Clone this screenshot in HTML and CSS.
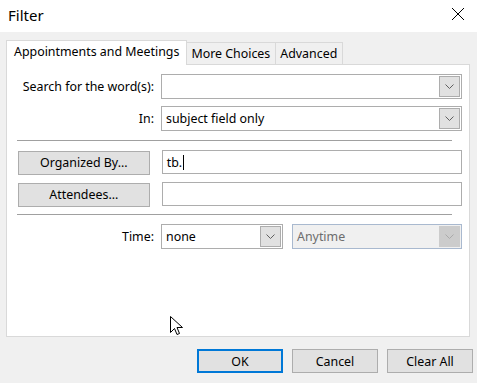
FILE: index.html
```html
<!DOCTYPE html>
<html>
<head>
<meta charset="utf-8">
<link rel="stylesheet" href="styles.css">
</head>
<body>
<div class="window">
  <div class="titlebar">
    <span class="title">Filter</span>
    <svg class="close" width="14" height="14" viewBox="0 0 14 14"><path d="M1 1L13 13M13 1L1 13" stroke="#000" stroke-width="1" fill="none"/></svg>
  </div>
  <div class="tabs">
    <div class="tab active">Appointments and Meetings</div>
    <div class="tab">More Choices</div>
    <div class="tab">Advanced</div>
  </div>
  <div class="panel">
    <div class="row">
      <label class="lbl">Search for the word(s):</label>
      <div class="combo wide">
        <span class="val"></span>
        <span class="drop"><svg width="9" height="5" viewBox="0 0 9 5"><path d="M0.5 0.5L4.5 4.5L8.5 0.5" stroke="#606060" fill="none"/></svg></span>
      </div>
    </div>
    <div class="row">
      <label class="lbl">In:</label>
      <div class="combo wide">
        <span class="val">subject field only</span>
        <span class="drop"><svg width="9" height="5" viewBox="0 0 9 5"><path d="M0.5 0.5L4.5 4.5L8.5 0.5" stroke="#606060" fill="none"/></svg></span>
      </div>
    </div>
    <div class="sep"></div>
    <div class="row btnrow">
      <button class="btn side">Organized By...</button>
      <div class="text"><span class="val">tb.</span><span class="caret"></span></div>
    </div>
    <div class="row btnrow">
      <button class="btn side">Attendees...</button>
      <div class="text"></div>
    </div>
    <div class="sep sep2"></div>
    <div class="row timerow">
      <label class="lbl">Time:</label>
      <div class="combo small">
        <span class="val">none</span>
        <span class="drop"><svg width="9" height="5" viewBox="0 0 9 5"><path d="M0.5 0.5L4.5 4.5L8.5 0.5" stroke="#606060" fill="none"/></svg></span>
      </div>
      <div class="combo disabled">
        <span class="val">Anytime</span>
        <span class="drop"><svg width="9" height="5" viewBox="0 0 9 5"><path d="M0.5 0.5L4.5 4.5L8.5 0.5" stroke="#aaa" fill="none"/></svg></span>
      </div>
    </div>
    <svg class="cursor" width="13" height="20" viewBox="0 0 13 20"><path d="M0.5 0.5L0.5 16.5L4.5 12.5L7 18.5L9.5 17.5L7 11.5L12.5 11.5Z" fill="#fff" stroke="#000" stroke-width="1" stroke-linejoin="miter"/></svg>
  </div>
  <div class="footer">
    <button class="btn foot default">OK</button>
    <button class="btn foot">Cancel</button>
    <button class="btn foot">Clear All</button>
  </div>
</div>
</body>
</html>
```

FILE: styles.css
```css
html, body {
  margin: 0;
  padding: 0;
}
body {
  width: 477px;
  height: 383px;
  background: #f0f0f0;
  font-family: "Noto Sans", "Open Sans", sans-serif;
  font-size: 12.4px;
  color: #000;
  overflow: hidden;
}
.window {
  display: flex;
  flex-direction: column;
  height: 383px;
}
.titlebar {
  height: 32px;
  background: #fff;
  display: flex;
  align-items: center;
  justify-content: space-between;
  padding: 0 12px 0 8px;
  flex: none;
}
.title {
  font-size: 15px;
  margin-top: -2px;
}
.close {
  display: block;
  margin-top: -5px;
}
.tabs {
  display: flex;
  align-items: flex-start;
  margin: 8px 0 -1px 6px;
  height: 25px;
  position: relative;
  z-index: 2;
}
.tab {
  height: 22px;
  margin-top: 2px;
  line-height: 21px;
  padding: 0 5px 0 4px;
  border: 1px solid #d9d9d9;
  border-bottom: none;
  background: #f0f0f0;
  box-sizing: border-box;
  margin-left: -1px;
}
.tab.active {
  height: 25px;
  margin-top: 0;
  line-height: 22px;
  background: #fff;
  padding: 0 7px 0 7px;
  margin-left: 0;
}
.tab.active + .tab {
  margin-left: 0;
  border-left: none;
}
.panel {
  position: relative;
  margin: 0 7px 0 6px;
  height: 273px;
  box-sizing: border-box;
  border: 1px solid #d9d9d9;
  background: #fff;
  padding: 9px 7px 0 0;
  display: flex;
  flex-direction: column;
  flex: none;
}
.row {
  display: flex;
  align-items: center;
  height: 25px;
  margin-bottom: 7px;
}
.lbl {
  width: 147px;
  text-align: right;
  padding-right: 7px;
  flex: none;
}
.combo {
  display: flex;
  align-items: center;
  height: 25px;
  box-sizing: border-box;
  border: 1px solid #adadad;
  background: #fff;
  padding: 1px;
}
.combo.wide {
  width: 301px;
}
.combo.small {
  width: 122px;
  margin-right: 9px;
}
.combo.disabled {
  width: 170px;
  background: #f0f0f0;
  border-color: #a9b9cf;
  color: #6d6d6d;
}
.val {
  flex: 1;
  padding-left: 3px;
  white-space: nowrap;
  overflow: hidden;
}
.drop {
  width: 21px;
  height: 21px;
  box-sizing: border-box;
  background: #e1e1e1;
  border: 1px solid #adadad;
  display: flex;
  align-items: center;
  justify-content: center;
  flex: none;
}
.disabled .drop {
  background: #cccccc;
  border-color: #cccccc;
}
.sep {
  height: 1px;
  background: #a0a0a0;
  margin: 2px 10px 9px 10px;
  flex: none;
}
.sep2 {
  margin-top: 0;
  margin-bottom: 9px;
}
.btnrow {
  height: 24px;
  margin-bottom: 8px;
}
.btn {
  font-family: inherit;
  font-size: 12.4px;
  color: #000;
  background: #e1e1e1;
  border: 1px solid #adadad;
  height: 24px;
  padding: 0;
  box-sizing: border-box;
  margin: 0;
}
.btn.side {
  width: 132px;
  margin-left: 11px;
  margin-right: 12px;
  margin-top: 1px;
}
.text {
  width: 301px;
  height: 24px;
  box-sizing: border-box;
  border: 1px solid #adadad;
  background: #fff;
  display: flex;
  align-items: center;
  padding-left: 1px;
}
.text .val {
  flex: none;
}
.caret {
  width: 1px;
  height: 15px;
  background: #000;
  margin-left: 1px;
}
.timerow {
  height: 25px;
}
.cursor {
  position: absolute;
  left: 163px;
  top: 251px;
}
.footer {
  display: flex;
  justify-content: flex-end;
  gap: 9px;
  padding: 12px 4px 0 0;
}
.btn.foot {
  width: 86px;
}
.btn.default {
  border: 2px solid #0078d7;
}
```
